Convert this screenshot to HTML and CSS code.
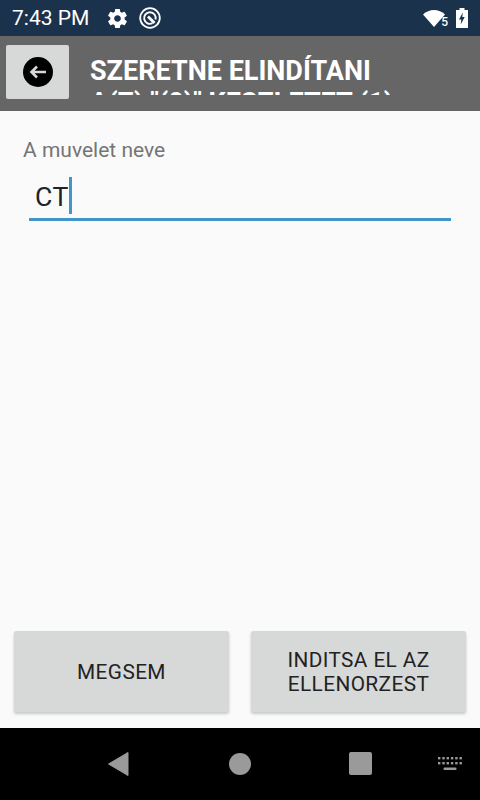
FILE: index.html
```html
<!DOCTYPE html>
<html lang="hu">
<head>
    <meta charset="UTF-8">
    <meta name="viewport" content="width=device-width, initial-scale=1.0">
    <title>A muvelet neve</title>
    <link rel="stylesheet" href="styles.css">
</head>
<body>
    <div class="status-bar">
      <span class="clock">7:43 PM</span>
      <svg class="status-icon gear" viewBox="0 0 24 24" width="23" height="23">
        <path fill="#fff" d="M19.4 13c.04-.32.07-.66.07-1s-.03-.68-.07-1l2.1-1.65c.19-.15.24-.42.12-.64l-2-3.46c-.12-.22-.39-.3-.61-.22l-2.49 1c-.52-.4-1.08-.73-1.69-.98l-.38-2.65C14.46 2.18 14.25 2 14 2h-4c-.25 0-.46.18-.49.42l-.38 2.65c-.61.25-1.17.59-1.69.98l-2.49-1c-.23-.09-.49 0-.61.22l-2 3.46c-.13.22-.07.49.12.64L4.57 11c-.04.32-.07.66-.07 1s.03.68.07 1l-2.11 1.65c-.19.15-.24.42-.12.64l2 3.46c.12.22.39.3.61.22l2.49-1c.52.4 1.08.73 1.69.98l.38 2.65c.03.24.24.42.49.42h4c.25 0 .46-.18.49-.42l.38-2.65c.61-.25 1.17-.59 1.69-.98l2.49 1c.23.09.49 0 .61-.22l2-3.46c.12-.22.07-.49-.12-.64L19.4 13zM12 15.500c-1.930 0-3.500-1.570-3.500-3.500s1.570-3.500 3.500-3.500 3.500 1.570 3.500 3.500-1.570 3.500-3.500 3.500z"/>
      </svg>
      <svg class="status-icon" viewBox="0 0 24 24" width="24" height="24" fill="none" stroke="#fff">
        <circle cx="12" cy="12" r="9.800" stroke-width="1.800"/>
        <path d="M14.500 17.200A5.800 5.800 0 1 1 17.500 13.500" stroke-width="1.900"/>
        <path d="M10 10.500 L16.500 17" stroke-width="2.800"/>
      </svg>
      <div class="status-right">
        <div class="wifi">
          <svg viewBox="0 0 24 20" width="24" height="20">
            <path fill="#fff" d="M0 6.500C3 3.500 7 2 11 2s8 1.500 11 4.500L11 19z"/>
          </svg>
          <span class="wifi-badge">5</span>
        </div>
        <svg viewBox="0 0 12 20" width="12" height="20">
          <path fill="#fff" d="M3.500 0h5v2H12v18H0V2h3.500z"/>
          <path fill="#1b324c" d="M6.800 4.500 3 11.500h2.300l-.6 5 4-7.500H6.300z"/>
        </svg>
      </div>
    </div>

    <div class="header">
      <button class="back-btn">
        <svg viewBox="0 0 30 30" width="30" height="30">
          <circle cx="15" cy="15" r="15" fill="#000"/>
          <path d="M23 15H8.500M14 9.500 8.500 15l5.500 5.500" fill="none" stroke="#d7d8d8" stroke-width="2.600"/>
        </svg>
      </button>
      <div class="title">SZERETNE ELINDÍTANI A(Z) "(0)" KESZLETET (1)</div>
    </div>

    <div class="content">
      <label class="field-label" for="name">A muvelet neve</label>
      <div class="field">
        <span class="field-value">CT</span><span class="caret"></span>
      </div>
    </div>

    <div class="actions">
      <button class="btn">MEGSEM</button>
      <button class="btn">INDITSA EL AZ ELLENORZEST</button>
    </div>

    <div class="nav-bar">
      <svg class="nav-back" viewBox="0 0 22 26" width="22" height="26">
        <path fill="#9a9a9a" d="M21 1.500v23L1.500 13z" stroke="#9a9a9a" stroke-linejoin="round"/>
      </svg>
      <span class="nav-home"></span>
      <span class="nav-recent"></span>
      <svg class="nav-keyboard" viewBox="0 0 24 14" width="24" height="14">
        <g fill="#9a9a9a">
          <rect x="0" y="0" width="2.400" height="2.400"/><rect x="4.300" y="0" width="2.400" height="2.400"/><rect x="8.600" y="0" width="2.400" height="2.400"/><rect x="12.900" y="0" width="2.400" height="2.400"/><rect x="17.200" y="0" width="2.400" height="2.400"/><rect x="21.500" y="0" width="2.400" height="2.400"/>
          <rect x="0" y="5" width="2.400" height="2.400"/><rect x="4.300" y="5" width="2.400" height="2.400"/><rect x="8.600" y="5" width="2.400" height="2.400"/><rect x="12.900" y="5" width="2.400" height="2.400"/><rect x="17.200" y="5" width="2.400" height="2.400"/><rect x="21.500" y="5" width="2.400" height="2.400"/>
          <rect x="5.500" y="10.500" width="13" height="2.500" rx="1"/>
        </g>
      </svg>
    </div>
</body>
</html>
```

FILE: styles.css
```css
body {
  margin: 0;
  width: 480px;
  height: 800px;
  display: flex;
  flex-direction: column;
  overflow: hidden;
  font-family: Roboto, sans-serif;
  background-color: #fafafa;
}

.status-bar {
  height: 36px;
  flex: none;
  display: flex;
  align-items: center;
  background-color: #1b324c;
  color: #fff;
  padding: 0 12px;
}
.clock {
  font-size: 21px;
  margin-right: 17px;
}
.status-icon {
  margin-right: 9px;
}
.status-right {
  margin-left: auto;
  display: flex;
  align-items: center;
  gap: 9px;
}
.wifi {
  position: relative;
  display: flex;
  width: 24px;
}
.wifi-badge {
  position: absolute;
  right: -1px;
  bottom: 0;
  font-size: 12px;
  font-weight: 500;
  line-height: 12px;
}

.header {
  height: 75px;
  flex: none;
  display: flex;
  align-items: flex-start;
  background-color: #666;
  overflow: hidden;
}
.back-btn {
  width: 63px;
  height: 54px;
  flex: none;
  margin: 9px 0 0 6px;
  padding: 0;
  border: none;
  border-radius: 2px;
  background-color: #d7d8d8;
  display: flex;
  align-items: center;
  justify-content: center;
}
.title {
  margin: 19px 0 0 21px;
  width: 320px;
  height: 40px;
  overflow: hidden;
  color: #fff;
  font-size: 27px;
  font-weight: 700;
  line-height: 32px;
}

.content {
  flex: 1;
  padding: 27px 29px 0 23px;
}
.field-label {
  display: block;
  color: #757575;
  font-size: 21px;
  line-height: 24px;
}
.field {
  margin: 8px 0 0 6px;
  height: 48px;
  padding: 0 0 0 6px;
  display: flex;
  align-items: center;
  border-bottom: 3px solid #4295c9;
}
.field-value {
  padding-top: 4px;
  color: #222;
  font-size: 26.6px;
  letter-spacing: 0.5px;
}
.caret {
  width: 3px;
  height: 37px;
  margin-top: 2px;
  background-color: #4295c9;
}

.actions {
  flex: none;
  display: flex;
  gap: 22px;
  padding: 0 14px 16px;
}
.btn {
  flex: 1;
  height: 81px;
  padding: 1px 20px 0;
  border: none;
  border-radius: 2px;
  background-color: #d7d8d8;
  box-shadow: 0 2px 3px rgba(0, 0, 0, 0.2);
  color: #222;
  font-family: Roboto, sans-serif;
  font-size: 20.8px;
  font-weight: 400;
  letter-spacing: 0.4px;
  line-height: 24px;
}

.nav-bar {
  height: 72px;
  flex: none;
  position: relative;
  background-color: #000;
}
.nav-back {
  position: absolute;
  left: 107px;
  top: 23px;
}
.nav-home {
  position: absolute;
  left: 229px;
  top: 25px;
  width: 22px;
  height: 22px;
  border-radius: 50%;
  background-color: #9a9a9a;
}
.nav-recent {
  position: absolute;
  left: 349px;
  top: 24px;
  width: 23px;
  height: 23px;
  border-radius: 2px;
  background-color: #9a9a9a;
}
.nav-keyboard {
  position: absolute;
  left: 438px;
  top: 29px;
}
```
